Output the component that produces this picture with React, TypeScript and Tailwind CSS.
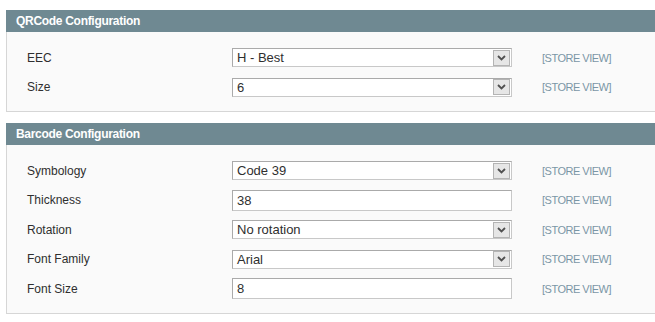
import React from 'react';

type Field = { label: string; value: string; kind: 'select' | 'text' };

const qrFields: Field[] = [
  { label: 'EEC', value: 'H - Best', kind: 'select' },
  { label: 'Size', value: '6', kind: 'select' },
];

const barcodeFields: Field[] = [
  { label: 'Symbology', value: 'Code 39', kind: 'select' },
  { label: 'Thickness', value: '38', kind: 'text' },
  { label: 'Rotation', value: 'No rotation', kind: 'select' },
  { label: 'Font Family', value: 'Arial', kind: 'select' },
  { label: 'Font Size', value: '8', kind: 'text' },
];

// fake native select with the old grey arrow button
const SelectBox = ({ value }: { value: string }) => (
  <div className="w-[280px] h-[19px] flex items-center bg-white border border-t-[#aaaaaa] border-l-[#aaaaaa] border-r-[#c8c8c8] border-b-[#c8c8c8] pl-[4px] pr-px">
    <span className="flex-1 text-[13px] leading-none text-[#2f2f2f]">{value}</span>
    <span className="w-[17px] h-[16px] flex items-center justify-center bg-[#e6e6e6] border border-[#b4b4b4]">
      <svg width="9" height="6" viewBox="0 0 9 6">
        <path d="M1 1 L4.5 4.5 L8 1" fill="none" stroke="#505050" strokeWidth="1.8" />
      </svg>
    </span>
  </div>
);

const TextBox = ({ value }: { value: string }) => (
  <div className="w-[280px] h-[21px] flex items-center bg-white border border-t-[#aaaaaa] border-l-[#aaaaaa] border-r-[#c8c8c8] border-b-[#c8c8c8] pl-[4px]">
    <span className="text-[13px] leading-none text-[#2f2f2f]">{value}</span>
  </div>
);

const Section = ({ title, fields }: { title: string; fields: Field[] }) => (
  <div>
    <div className="h-[22px] bg-[#6f8992] pl-[10px] flex items-center">
      <h4 className="text-white font-bold text-[12px] leading-none tracking-[-0.3px]">{title}</h4>
    </div>
    <div className="bg-[#fafafa] border-l border-b border-[#d6d6d6] pl-[20px] pt-[11px] pb-[9px]">
      {fields.map((f) => (
        <div key={f.label} className="h-[29.5px] flex items-center">
          <label className="w-[205px] text-[12px] text-[#2f2f2f]">{f.label}</label>
          {f.kind === 'select' ? <SelectBox value={f.value} /> : <TextBox value={f.value} />}
          <span className="ml-[30px] text-[11px] tracking-[-0.5px] text-[#7a96a6]">[STORE VIEW]</span>
        </div>
      ))}
    </div>
  </div>
);

export default function App() {
  return (
    <div className="w-[655px] h-[322px] overflow-hidden bg-white pl-[6px] pt-[10px] font-['Liberation_Sans',Arial,sans-serif]">
      <div className="w-[700px] flex flex-col gap-[11px]">
        <Section title="QRCode Configuration" fields={qrFields} />
        <Section title="Barcode Configuration" fields={barcodeFields} />
      </div>
    </div>
  );
}
